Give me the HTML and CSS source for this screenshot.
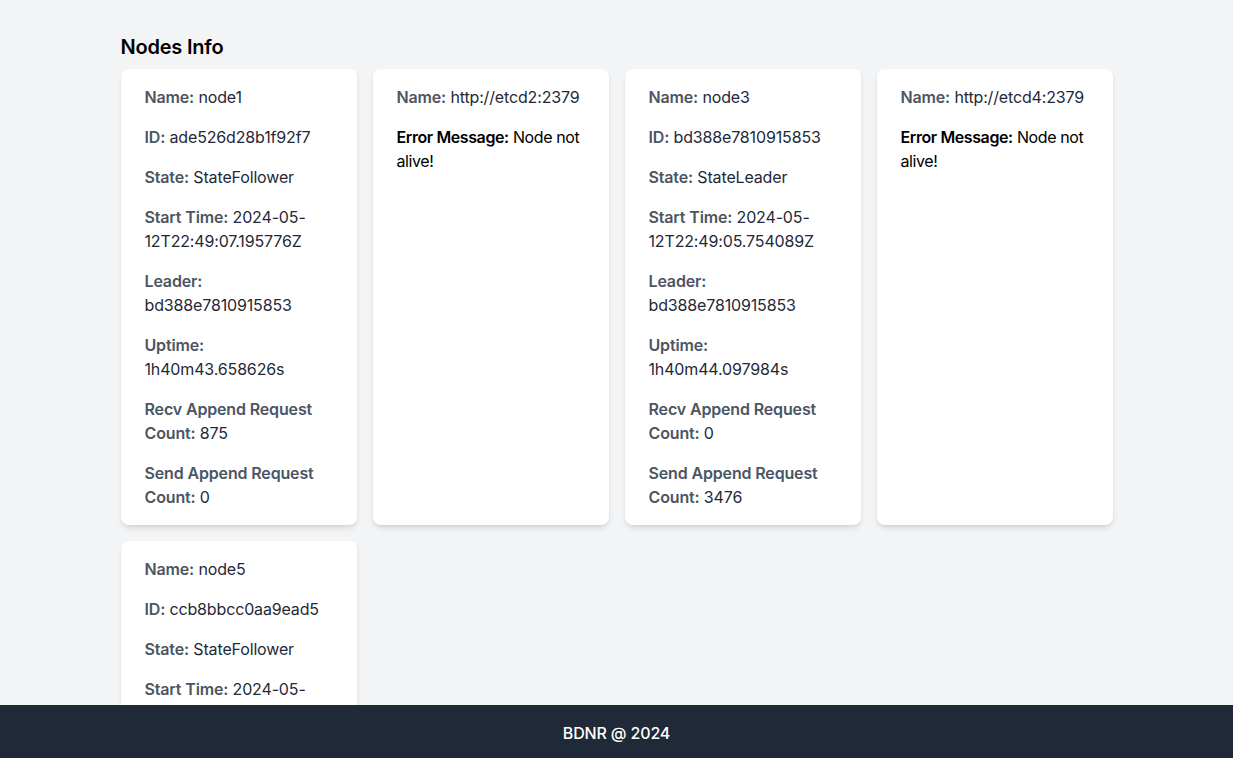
FILE: index.html
```html
<!DOCTYPE html>
<html>
<head>
<meta charset="utf-8">
<link rel="stylesheet" href="styles.css">
</head>
<body>
<main class="container">
  <h1 class="title">Nodes Info</h1>
  <div class="grid">
    <div class="card">
      <p><span class="label">Name:</span> node1</p>
      <p><span class="label">ID:</span> ade526d28b1f92f7</p>
      <p><span class="label">State:</span> StateFollower</p>
      <p><span class="label">Start Time:</span> 2024-05-12T22:49:07.195776Z</p>
      <p><span class="label">Leader:</span> bd388e7810915853</p>
      <p><span class="label">Uptime:</span> 1h40m43.658626s</p>
      <p><span class="label">Recv Append Request Count:</span> 875</p>
      <p><span class="label">Send Append Request Count:</span> 0</p>
    </div>
    <div class="card">
      <p><span class="label">Name:</span> http://etcd2:2379</p>
      <p class="error"><span class="err-label">Error Message:</span> Node not alive!</p>
    </div>
    <div class="card">
      <p><span class="label">Name:</span> node3</p>
      <p><span class="label">ID:</span> bd388e7810915853</p>
      <p><span class="label">State:</span> StateLeader</p>
      <p><span class="label">Start Time:</span> 2024-05-12T22:49:05.754089Z</p>
      <p><span class="label">Leader:</span> bd388e7810915853</p>
      <p><span class="label">Uptime:</span> 1h40m44.097984s</p>
      <p><span class="label">Recv Append Request Count:</span> 0</p>
      <p><span class="label">Send Append Request Count:</span> 3476</p>
    </div>
    <div class="card">
      <p><span class="label">Name:</span> http://etcd4:2379</p>
      <p class="error"><span class="err-label">Error Message:</span> Node not alive!</p>
    </div>
    <div class="card">
      <p><span class="label">Name:</span> node5</p>
      <p><span class="label">ID:</span> ccb8bbcc0aa9ead5</p>
      <p><span class="label">State:</span> StateFollower</p>
      <p><span class="label">Start Time:</span> 2024-05-12T22:49:06.312457Z</p>
      <p><span class="label">Leader:</span> bd388e7810915853</p>
      <p><span class="label">Uptime:</span> 1h40m44.501213s</p>
      <p><span class="label">Recv Append Request Count:</span> 3472</p>
      <p><span class="label">Send Append Request Count:</span> 0</p>
    </div>
  </div>
</main>
<footer class="footer">BDNR @ 2024</footer>
</body>
</html>
```

FILE: styles.css
```css
* { box-sizing: border-box; }
html, body { margin: 0; padding: 0; }
body {
  background: #f3f4f6;
  font-family: Inter, "Noto Sans", sans-serif;
  font-size: 16px;
  line-height: 24px;
  letter-spacing: -0.15px;
  color: #1f2937;
  min-height: 100vh;
}
.container {
  max-width: 1024px;
  margin: 0 auto;
  padding: 33px 16px 80px;
}
.title {
  margin: 0 0 8px;
  font-size: 20px;
  line-height: 28px;
  font-weight: 600;
  color: #000;
  letter-spacing: -0.2px;
}
.grid {
  display: grid;
  grid-template-columns: repeat(4, 1fr);
  gap: 16px;
}
.card {
  background: #fff;
  border-radius: 8px;
  box-shadow: 0 4px 6px -1px rgba(0,0,0,0.1), 0 2px 4px -2px rgba(0,0,0,0.1);
  padding: 16px 24px;
  display: flex;
  flex-direction: column;
  gap: 16px;
}
.card p { margin: 0; }
.label { font-weight: 600; color: #4b5563; }
.error { color: #000; letter-spacing: -0.4px; }
.err-label { font-weight: 600; color: #000; }
.footer {
  position: fixed;
  left: 0; right: 0; bottom: 0;
  height: 53px;
  background: #1f2937;
  color: #fff;
  display: flex;
  align-items: center;
  justify-content: center;
  font-size: 16px;
  line-height: 24px;
  font-weight: 500;
  padding-top: 2px;
}
```
